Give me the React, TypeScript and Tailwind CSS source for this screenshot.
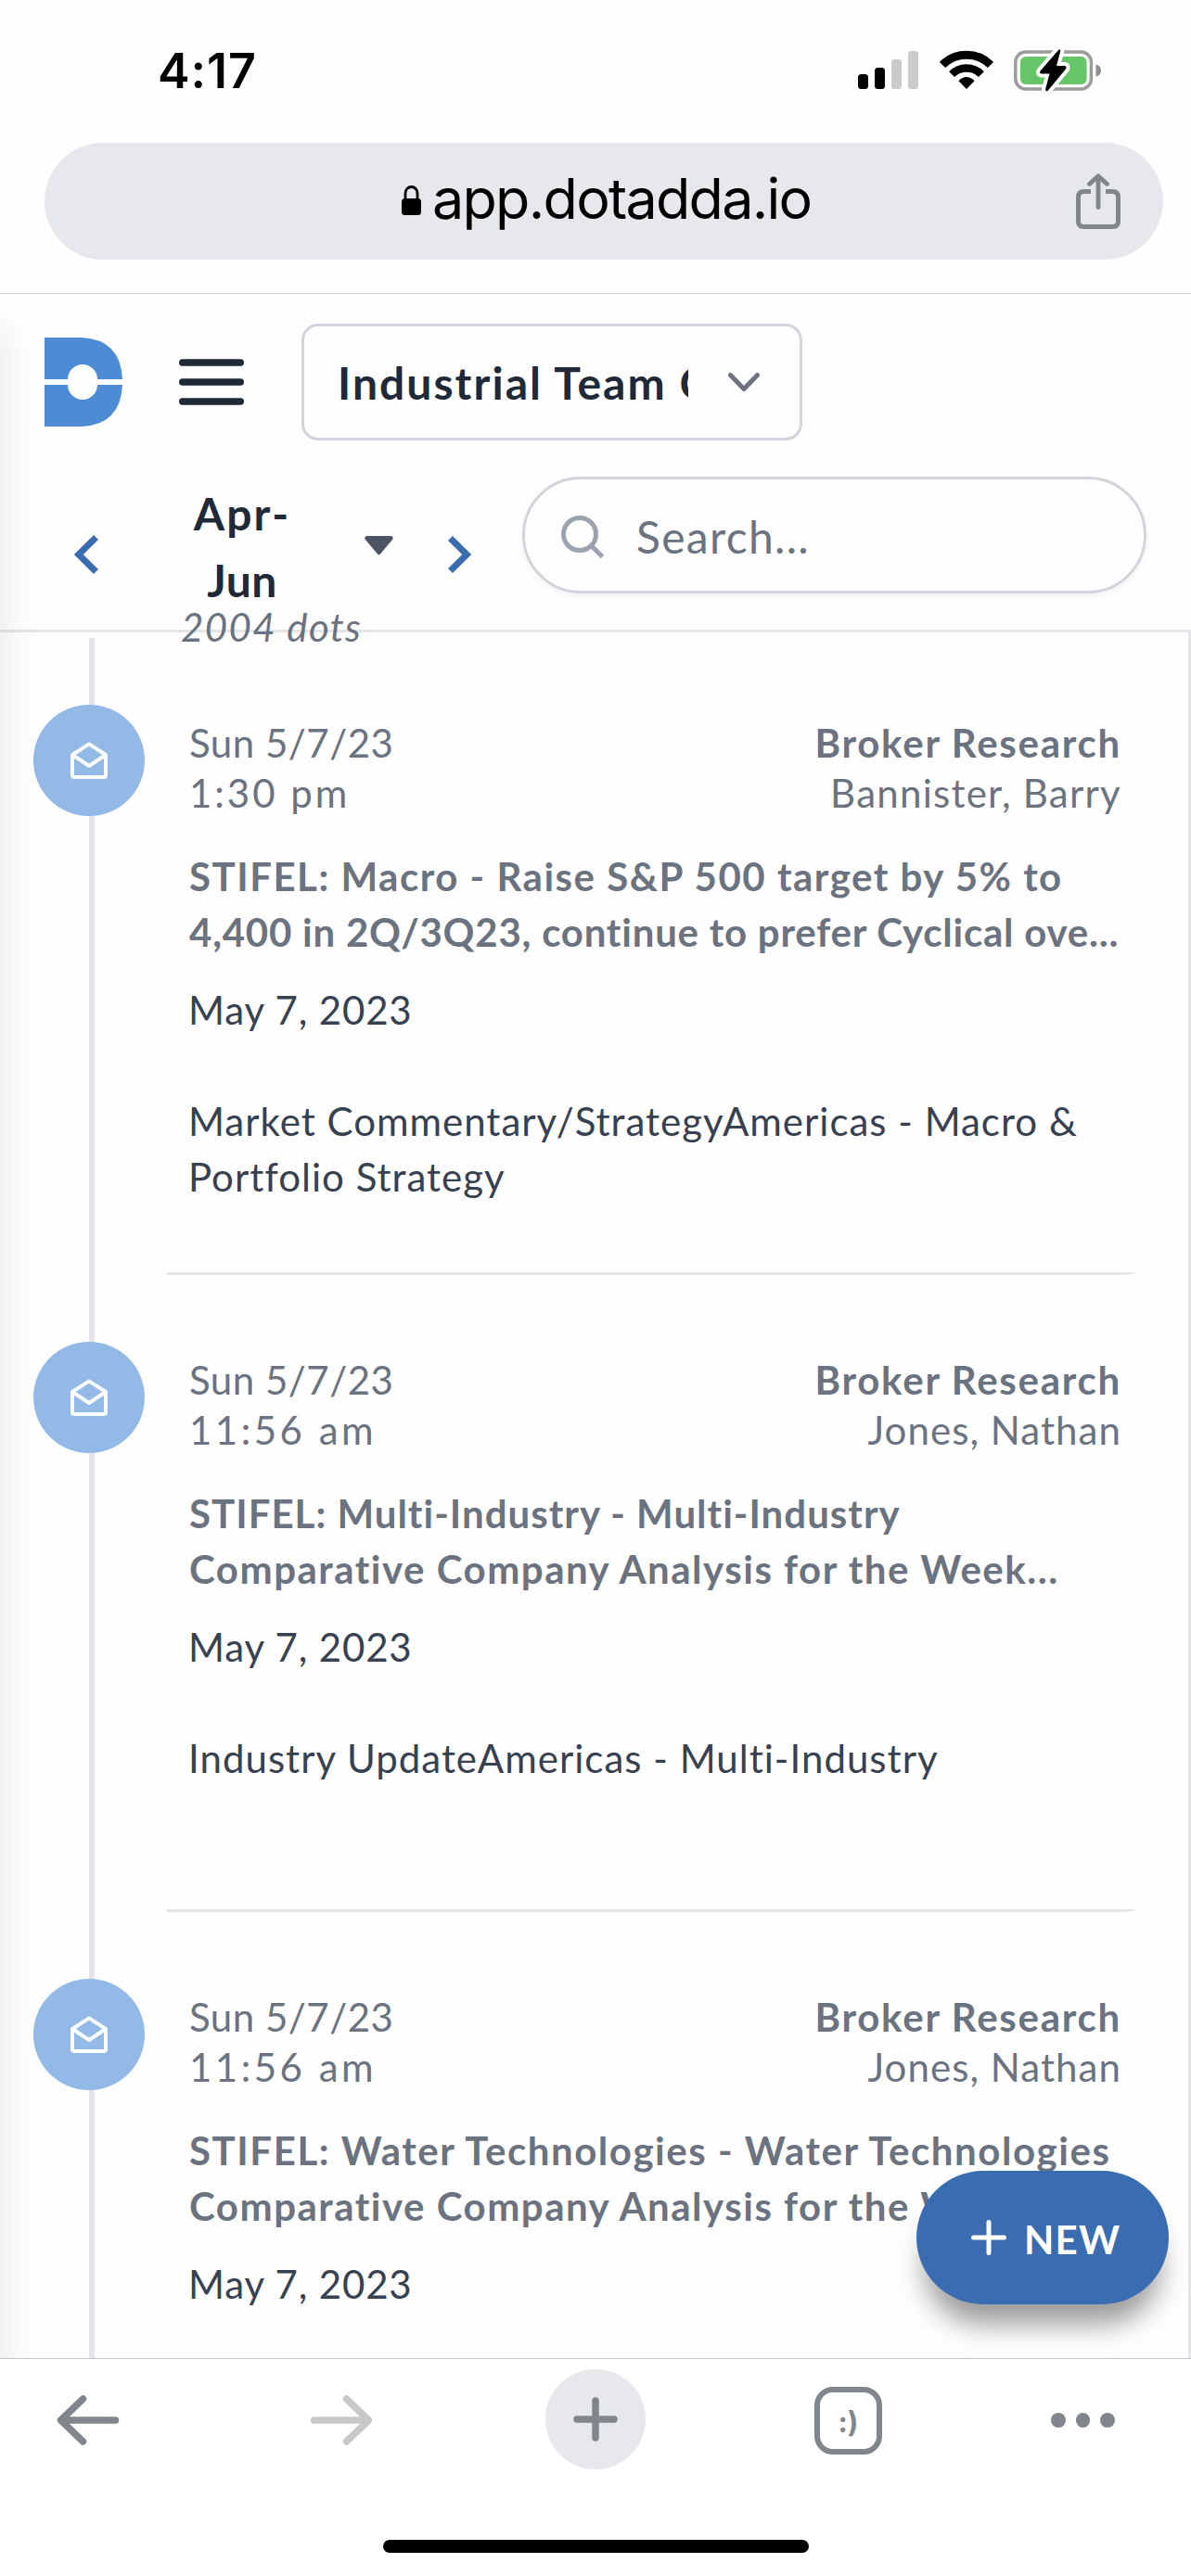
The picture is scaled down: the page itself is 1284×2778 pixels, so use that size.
type TextLine = { text: string; tracking: string };

type Dot = {
  id: number;
  time: TextLine;
  author: TextLine;
  title: TextLine[];
  body: TextLine[];
};

const dots: Dot[] = [
  {
    id: 1,
    time: { text: "1:30 pm", tracking: "tracking-[3px]" },
    author: { text: "Bannister, Barry", tracking: "tracking-[1.26px]" },
    title: [
      { text: "STIFEL: Macro - Raise S&P 500 target by 5% to", tracking: "tracking-[1.5px]" },
      { text: "4,400 in 2Q/3Q23, continue to prefer Cyclical ove...", tracking: "tracking-[0.77px]" },
    ],
    body: [
      { text: "Market Commentary/StrategyAmericas - Macro &", tracking: "tracking-[1px]" },
      { text: "Portfolio Strategy", tracking: "tracking-[1px]" },
    ],
  },
  {
    id: 2,
    time: { text: "11:56 am", tracking: "tracking-[3.5px]" },
    author: { text: "Jones, Nathan", tracking: "tracking-[1.06px]" },
    title: [
      { text: "STIFEL: Multi-Industry - Multi-Industry", tracking: "tracking-[1px]" },
      { text: "Comparative Company Analysis for the Week...", tracking: "tracking-[1.5px]" },
    ],
    body: [{ text: "Industry UpdateAmericas - Multi-Industry", tracking: "tracking-[1.02px]" }],
  },
  {
    id: 3,
    time: { text: "11:56 am", tracking: "tracking-[3.5px]" },
    author: { text: "Jones, Nathan", tracking: "tracking-[1.06px]" },
    title: [
      { text: "STIFEL: Water Technologies - Water Technologies", tracking: "tracking-[1.56px]" },
      { text: "Comparative Company Analysis for the Week...", tracking: "tracking-[1.5px]" },
    ],
    body: [],
  },
];

function SignalIcon() {
  return (
    <svg width="65" height="42" viewBox="0 0 65 42">
      <rect x="0" y="26" width="11" height="16" rx="3.5" fill="#000" />
      <rect x="18" y="19" width="11" height="23" rx="3.5" fill="#000" />
      <rect x="36" y="10" width="11" height="32" rx="3.5" fill="#cbcbcb" />
      <rect x="54" y="1" width="11" height="41" rx="3.5" fill="#cbcbcb" />
    </svg>
  );
}

function WifiIcon() {
  return (
    <svg width="58" height="42" viewBox="0 0 58 42" fill="none" stroke="#000">
      <path d="M3 16 A36.8 36.8 0 0 1 55 16" strokeWidth="8.8" />
      <path d="M13.1 26.1 A22.5 22.5 0 0 1 44.9 26.1" strokeWidth="8.4" />
      <path d="M29 42 L20.4 33.2 Q29 25 37.6 33.2 Z" fill="#000" stroke="none" />
    </svg>
  );
}

function BatteryIcon() {
  return (
    <svg width="95" height="48" viewBox="0 0 95 48">
      <rect x="1.8" y="4" width="81.6" height="40" rx="11" fill="none" stroke="#9b9b9d" strokeWidth="3.4" />
      <rect x="7" y="9" width="71.5" height="30" rx="6" fill="#66c566" />
      <path d="M88.5 17.5 Q94 19 94 24 Q94 29 88.5 30.8 Z" fill="#8e8e90" />
      <path
        d="M48.5 1.5 L28.5 24.5 Q27 27.5 30 27.5 H38.5 L34 44.5 Q34.5 47 36.5 46 L56 22.5 Q57.5 19 54.5 19 H46 L50.3 3 Q50 0.5 48.5 1.5 Z"
        fill="#000"
        stroke="#fff"
        strokeWidth="8"
        strokeLinejoin="round"
        paintOrder="stroke"
      />
    </svg>
  );
}

function LockIcon() {
  return (
    <svg width="21" height="36" viewBox="0 0 21 36">
      <path d="M4 17 V8.5 A6.5 7 0 0 1 17 8.5 V17" fill="none" stroke="#000" strokeWidth="2.8" />
      <rect x="0" y="14" width="21" height="18" rx="3.5" fill="#000" />
    </svg>
  );
}

function ShareIcon() {
  return (
    <svg width="48" height="60" viewBox="0 0 48 60" fill="none" stroke="#80868b" strokeWidth="5">
      <path d="M16 19.5 H8.5 Q2.5 19.5 2.5 25.5 V51.5 Q2.5 57.5 8.5 57.5 H39.5 Q45.5 57.5 45.5 51.5 V25.5 Q45.5 19.5 39.5 19.5 H32" />
      <path d="M24 36.5 V4 M14.5 11.5 L24 2.8 L33.5 11.5" strokeLinecap="round" strokeLinejoin="round" strokeWidth="4.8" />
    </svg>
  );
}

function Logo() {
  return (
    <svg width="84" height="96" viewBox="0 0 84 96">
      <path d="M0 0 H40 Q82 2 84 45 H57 A16 16 0 0 0 25 45 H0 Z" fill="#4d8bd5" />
      <path d="M0 96 H40 Q82 94 84 51 H57 A16 16 0 0 1 25 51 H0 Z" fill="#4d8bd5" />
    </svg>
  );
}

function MailOpenIcon() {
  return (
    <svg width="40" height="40" viewBox="0 0 40 40" fill="none" stroke="#f8fbff" strokeWidth="4" strokeLinejoin="round">
      <path d="M2 14 L20 2.4 L38 14 V36 Q38 38 36 38 H4 Q2 38 2 36 Z" />
      <path d="M2 14 L20 26 L38 14" />
    </svg>
  );
}

function StatusBar() {
  return (
    <div className="flex h-[154px] items-center pl-[170px] font-['Inter',sans-serif]">
      <span className="w-[755px] text-[52px] leading-[62px] font-semibold tracking-[0.9px] text-black">4:17</span>
      <div className="flex items-center pb-1">
        <SignalIcon />
        <div className="ml-[23px]">
          <WifiIcon />
        </div>
        <div className="ml-[22px] pt-[1px]">
          <BatteryIcon />
        </div>
      </div>
    </div>
  );
}

function AddressBar() {
  return (
    <div className="h-[163px] border-b border-[#cbcccd] px-[48px] pr-[30px]">
      <div className="flex h-[126px] items-center rounded-full bg-[#e7e8ec] pr-[46px] pl-[385px]">
        <div className="flex items-center gap-[12px] pb-[6px]">
          <div className="pt-[7px]">
            <LockIcon />
          </div>
          <span className="font-['Inter',sans-serif] text-[61px] leading-[72px] tracking-[-1.75px] text-black">
            app.dotadda.io
          </span>
        </div>
        <div className="ml-auto">
          <ShareIcon />
        </div>
      </div>
    </div>
  );
}

function Header() {
  return (
    <header className="h-[365px] border-b-[3px] border-[#e5e5e7] pt-[32px]">
      <div className="flex h-[126px] items-center pl-[48px]">
        <Logo />
        <svg className="ml-[61px]" width="70" height="56" viewBox="0 0 70 56" stroke="#1f2937" strokeWidth="7.5" strokeLinecap="round">
          <path d="M3.75 6.9 H66.25 M3.75 28 H66.25 M3.75 49.1 H66.25" />
        </svg>
        <div className="ml-[62px] flex h-[126px] w-[540px] items-center rounded-[18px] border-[3px] border-[#d1d5db] pl-[36px]">
          <div className="w-[378px] overflow-hidden pt-[2px] text-[48px] leading-[72px] font-bold tracking-[2.05px] whitespace-nowrap text-[#1f2937]">
            Industrial Team C
          </div>
          <svg className="ml-[42px]" width="36" height="24" viewBox="0 0 36 24" fill="none" stroke="#6b7280" strokeWidth="5" strokeLinecap="round" strokeLinejoin="round">
            <path d="M3.5 4.5 L18 19.5 L32.5 4.5" />
          </svg>
        </div>
      </div>
      <div className="mt-[39px] flex items-start pl-[79px]">
        <svg className="mt-[63px]" width="28" height="42" viewBox="0 0 28 42" fill="none" stroke="#3a6cb0" strokeWidth="7">
          <path d="M24.5 2.5 L5.8 21 L24.5 39.5" />
        </svg>
        <div className="mt-[4px] ml-[87px] w-[200px]">
          <div className="ml-[14px] w-[106px] text-center text-[48px] leading-[72px] font-bold text-[#1f2937]">
            <div className="tracking-[2.2px]">Apr-</div>
            <div className="tracking-[0.5px]">Jun</div>
          </div>
          <div className="-mt-[7px] ml-[1px] text-[42px] leading-[42px] tracking-[1.4px] whitespace-nowrap text-[#6b7280] italic">
            2004 dots
          </div>
        </div>
        <svg className="mt-[64px] -ml-[1px]" width="31" height="21" viewBox="0 0 31 21">
          <path d="M2.5 0 H28.5 Q32 1 30 4 L17 19.5 Q15.5 21 14 19.5 L1 4 Q-1 1 2.5 0 Z" fill="#4b5563" />
        </svg>
        <svg className="mt-[63px] ml-[57px]" width="28" height="42" viewBox="0 0 28 42" fill="none" stroke="#3a6cb0" strokeWidth="7">
          <path d="M4.5 3.5 L22.2 21 L4.5 38.5" />
        </svg>
        <div className="ml-[54px] flex h-[126px] w-[673px] items-center rounded-full border-[3px] border-[#d1d5db] pl-[38px] shadow-[0_3px_6px_rgba(0,0,0,0.05)]">
          <svg className="mt-[3px]" width="48" height="48" viewBox="0 0 48 48" fill="none" stroke="#9ca3af" strokeWidth="5">
            <circle cx="21" cy="21" r="17.5" />
            <path d="M33 33 L45.5 45.5" />
          </svg>
          <span className="ml-[34px] pt-[4px] text-[48px] leading-[72px] tracking-[1.3px] text-[#6b7280]">Search...</span>
        </div>
      </div>
    </header>
  );
}

function Lines({ lines }: { lines: TextLine[] }) {
  return (
    <>
      {lines.map((line) => (
        <div key={line.text} className={line.tracking}>
          {line.text}
        </div>
      ))}
    </>
  );
}

function TimelineItem({ dot }: { dot: Dot }) {
  return (
    <article className="flex h-[687px] shrink-0 pl-[36px]">
      <div className="mt-[72px] flex size-[120px] shrink-0 items-center justify-center rounded-full bg-[#93b9e6]">
        <MailOpenIcon />
      </div>
      <div className="ml-[24px] flex w-[1044px] flex-col justify-between">
        <div className="pt-[86px] pr-[15px] pl-[24px] text-[42px] whitespace-nowrap">
          <div className="flex justify-between leading-[54px] text-[#6b7280]">
            <div>
              <div className="tracking-[0.5px]">Sun 5/7/23</div>
              <div className={dot.time.tracking}>{dot.time.text}</div>
            </div>
            <div className="text-right">
              <div className="font-bold tracking-[1.74px]">Broker Research</div>
              <div className={dot.author.tracking}>{dot.author.text}</div>
            </div>
          </div>
          <h2 className="mt-[33px] leading-[60px] font-bold text-[#6b7280]">
            <Lines lines={dot.title} />
          </h2>
          <div className="mt-[24px] -ml-[1px] leading-[60px] text-[#374151]">
            <div className="mb-[60px] tracking-[0.85px]">May 7, 2023</div>
            <Lines lines={dot.body} />
          </div>
        </div>
        <div className="h-[3px] rounded-br-[18px_3px] bg-[#e5e5e7]" />
      </div>
    </article>
  );
}

function BottomBar() {
  return (
    <nav className="h-[235px] border-t border-[#c6c6c6] bg-white">
      <div className="flex h-[132px] items-center pl-[61px]">
        <svg width="68" height="56" viewBox="0 0 68 56" fill="none" stroke="#80868b" strokeWidth="7.5" strokeLinecap="round" strokeLinejoin="round">
          <path d="M63.5 28 H5 M28.5 5 L4.5 28 L28.5 51" />
        </svg>
        <svg className="ml-[205px]" width="68" height="56" viewBox="0 0 68 56" fill="none" stroke="#c8c8c8" strokeWidth="7.5" strokeLinecap="round" strokeLinejoin="round">
          <path d="M4.5 28 H63 M39.5 5 L63.5 28 L39.5 51" />
        </svg>
        <div className="mb-[2px] ml-[186px] flex size-[108px] items-center justify-center rounded-full bg-[#e7e8ec]">
          <svg width="48" height="48" viewBox="0 0 48 48" stroke="#80868b" strokeWidth="7.5" strokeLinecap="round">
            <path d="M24 4 V44 M4 24 H44" />
          </svg>
        </div>
        <div className="ml-[182px] flex size-[73px] items-center justify-center rounded-[20px] border-[6.5px] border-[#80868b] pt-[3px] font-['Inter',sans-serif] text-[31px] leading-none font-bold text-[#80868b]">
          :)
        </div>
        <div className="ml-[182px] flex gap-[11px]">
          <div className="size-[15.5px] rounded-full bg-[#80868b]" />
          <div className="size-[15.5px] rounded-full bg-[#80868b]" />
          <div className="size-[15.5px] rounded-full bg-[#80868b]" />
        </div>
      </div>
      <div className="mt-[63px] ml-[413px] h-[14px] w-[459px] rounded-full bg-black" />
    </nav>
  );
}

export default function App() {
  return (
    <div className="flex h-[2778px] w-[1284px] flex-col overflow-hidden bg-[#fefefe] font-['Lato',sans-serif]">
      <StatusBar />
      <AddressBar />
      <div className="relative h-[2226px] overflow-hidden">
        <Header />
        <main className="relative h-[1861px] overflow-hidden border-r-[3px] border-[#e5e5e9] pt-[6px]">
          <div className="absolute top-[6px] bottom-0 left-[96px] w-[6px] bg-[#e4e5ea]" />
          <div className="relative">
            {dots.map((dot) => (
              <TimelineItem key={dot.id} dot={dot} />
            ))}
          </div>
        </main>
        <button className="absolute right-[24px] bottom-[58px] flex h-[144px] w-[272px] items-center rounded-full bg-[#3a6cb1] pl-[59px] text-white shadow-[0_30px_30px_-9px_rgba(0,0,0,0.4)]">
          <svg width="38" height="38" viewBox="0 0 38 38" stroke="#fff" strokeWidth="5" strokeLinecap="round">
            <path d="M19 2.5 V35.5 M2.5 19 H35.5" />
          </svg>
          <span className="ml-[19px] pt-[4px] text-[42px] leading-[60px] font-bold tracking-[1.2px]">NEW</span>
        </button>
        <div className="absolute top-[36px] -bottom-[60px] -left-[40px] w-[40px] shadow-[0_0_45px_rgba(0,0,0,0.1)]" />
      </div>
      <BottomBar />
    </div>
  );
}
